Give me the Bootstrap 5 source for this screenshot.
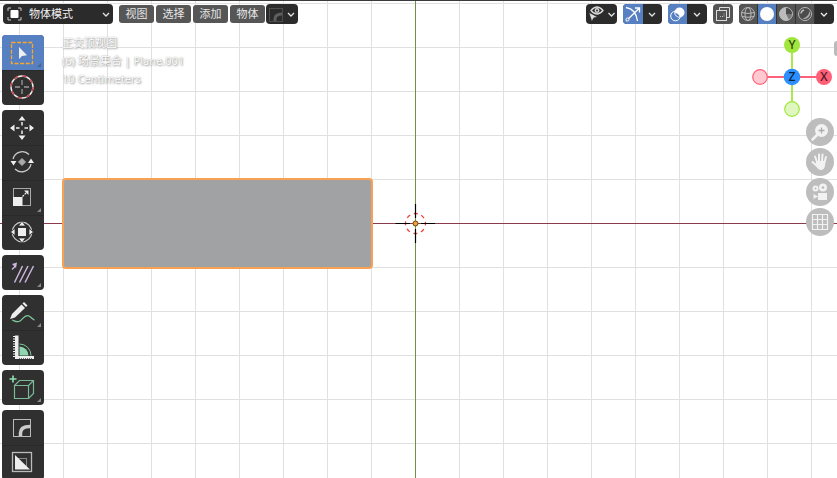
<!DOCTYPE html>
<html lang="zh-CN">
<head>
<meta charset="utf-8">
<meta name="viewport" content="width=device-width, initial-scale=1">
<title>3D 视图</title>
<link href="https://cdn.jsdelivr.net/npm/bootstrap@5.3.0/dist/css/bootstrap.min.css" rel="stylesheet">
<style>
body{font-family:"Noto Sans","Noto Sans CJK SC",sans-serif;font-size:11px;line-height:18px;background:#fff}
svg{display:block;flex:none}
button{border:0;padding:0;background:none;color:#e6e6e6}
.viewport{border-top:1px solid #3d3a40;
 background-image:linear-gradient(90deg,#e0e0e0 1px,transparent 1px),linear-gradient(#e0e0e0 1px,transparent 1px);
 background-size:44px 44px;background-position:19px 0,0 2px}
.axis-x{left:0;right:0;top:222px;height:1px;background:#8a3a48}
.axis-y{top:0;bottom:0;left:415px;width:1px;background:#6c9440}
.plane{left:62px;top:177px;width:311px;height:91px;background:#a1a2a4;border:2px solid #f9a152;border-radius:4px}
.cursor3d{left:395px;top:202px}
.topbar{padding:3px 3px 0}
.dark{background:#2b2b2b;border-radius:4px;height:20px;overflow:hidden}
.mode{width:110px;padding-left:4px}
.mode select{appearance:none;background:none;border:0;color:#f0f0f0;padding:0 0 0 7px;font-size:11px;line-height:18px;min-width:0;outline:0}
.menus{gap:2px;margin-left:6px;margin-right:1px}
.menus button{width:35px;height:18px;background:#565656;border-radius:3px;line-height:18px}
.right{gap:6px}
.on{background:#5680c2}
.mid{background:#545454}
.shade button+button{border-left:1px solid #333}
.tools{width:42px;gap:5px;margin:11px 0 0 2px}
.toolset{background:#303030;border-radius:4px;overflow:hidden}
.toolset button{display:block;height:35px}
.toolset button+button{border-top:1px solid #292929}
.info{margin:10px 0 0 18px;color:#fff;text-shadow:0 0 1px #999,1px 1px 2px #999}
.info p{margin:0}
.gizmo{padding:11px 3px 0 0}
.compass{margin-right:1px}
.navs{gap:2px;margin-top:1px}
.navs button{width:28px;height:28px;border-radius:50%;background:#bdbdbd}
.handle{right:0;top:40px;width:3px;height:15px;background:#bbb;border-radius:5px 0 0 5px}
</style>
<script src="https://cdn.jsdelivr.net/npm/bootstrap@5.3.0/dist/js/bootstrap.bundle.min.js"></script>
</head>
<body>
<main class="viewport position-relative vh-100 overflow-hidden">
 <div class="axis-x position-absolute"></div>
 <div class="axis-y position-absolute"></div>
 <div class="plane position-absolute"></div>
 <svg class="cursor3d position-absolute" width="41" height="41" viewBox="0 0 41 41"><circle cx="20.500" cy="20.500" r="10" fill="none" stroke="#fff" stroke-width="1.300"/><circle cx="20.500" cy="20.500" r="10" fill="none" stroke="#f04040" stroke-width="1.300" stroke-dasharray="4 3.850" stroke-dashoffset="2"/><path d="M0.500 20.500H15M26 20.500H40M20.500 1V15M20.500 26V40" stroke="#000" stroke-width="1.200"/><circle cx="20.500" cy="20.500" r="2.500" fill="#f6a12c" stroke="#5b4320"/></svg>
 <div class="handle position-absolute"></div>

 <header class="topbar position-relative d-flex align-items-center justify-content-between">
  <div class="d-flex align-items-center">
   <div class="mode dark d-flex align-items-center">
    <svg width="15" height="14" viewBox="0 0 15 14"><path d="M1 4V1H4M11 1H14V4M14 10V13H11M4 13H1V10" fill="none" stroke="#c8c8c8"/><rect x="3.500" y="3" width="8" height="8" rx="1" fill="#fff"/></svg>
    <select aria-label="模式" class="flex-grow-1"><option>物体模式</option></select>
    <svg width="15" height="20" viewBox="0 0 15 20"><path d="M5 9l3 3 3-3" fill="none" stroke="#e4e4e4" stroke-width="1.300"/></svg>
   </div>
   <nav class="menus d-flex align-items-center" aria-label="菜单">
    <button>视图</button><button>选择</button><button>添加</button><button>物体</button>
   </nav>
   <button class="dark" aria-label="倒角"><svg width="32" height="20" viewBox="0 0 32 20"><rect x="3.500" y="4.500" width="13" height="13" fill="none" stroke="#4e4e4e"/><path d="M9 17v-2q0-5 7-5" fill="none" stroke="#5e5e5e" stroke-width="3"/><path d="M22 9l3 3 3-3" fill="none" stroke="#e4e4e4" stroke-width="1.300"/></svg></button>
  </div>
  <div class="right d-flex">
   <button class="dark" aria-label="可见性"><svg width="31" height="20" viewBox="0 0 31 20"><path d="M5 6.500q6-7 12 0q-6 7-12 0z" fill="none" stroke="#d8d8d8" stroke-width="1.300"/><circle cx="11" cy="6.500" r="2.400" fill="#d8d8d8"/><circle cx="11" cy="6.500" r="1" fill="#2b2b2b"/><path d="M3 8.500l8.500 4.500-3.700.800-2 3.500z" fill="#e0e0e0" stroke="#2b2b2b" stroke-width=".500"/><path d="M22.500 9l3 3 3-3" fill="none" stroke="#e4e4e4" stroke-width="1.300"/></svg></button>
   <div class="dark d-flex">
    <button class="on" aria-label="控件"><svg width="20" height="20" viewBox="0 0 20 20"><path d="M3 3.500Q13 5 14.500 17M3 17L16 4.500M12 4h4.500v4.500" fill="none" stroke="#fff" stroke-width="1.300"/><circle cx="4.500" cy="15.500" r="1.500" fill="#5680c2" stroke="#fff"/></svg></button>
    <button aria-label="控件选项"><svg width="19" height="20" viewBox="0 0 19 20"><path d="M6 9l3 3 3-3" fill="none" stroke="#e4e4e4" stroke-width="1.300"/></svg></button>
   </div>
   <div class="dark d-flex">
    <button class="on" aria-label="叠加层"><svg width="19" height="20" viewBox="0 0 19 20"><circle cx="7.500" cy="12" r="4.800" fill="none" stroke="#fff"/><circle cx="11.500" cy="8.500" r="5" fill="#fff"/><path d="M6.700 8.800a5 5 0 0 0 5.300 4.500a5 5 0 0 0-5.300-4.500" fill="#5680c2" stroke="#fff" stroke-width=".700"/></svg></button>
    <button aria-label="叠加层选项"><svg width="20" height="20" viewBox="0 0 20 20"><path d="M7 9l3 3 3-3" fill="none" stroke="#e4e4e4" stroke-width="1.300"/></svg></button>
   </div>
   <button class="dark mid" aria-label="透视模式"><svg width="20" height="20" viewBox="0 0 20 20"><path d="M6.500 6.500V3.500H16.500V13.500H13.500" fill="none" stroke="#ddd"/><rect x="3.500" y="6.500" width="10" height="10" fill="none" stroke="#ddd"/><path d="M7 12.500h4V9" fill="none" stroke="#bbb" stroke-dasharray="1 1"/></svg></button>
   <div class="dark d-flex shade">
    <button class="mid" aria-label="线框"><svg width="18" height="20" viewBox="0 0 18 20"><g fill="none" stroke="#b9b9b9"><circle cx="9" cy="10" r="6.500"/><ellipse cx="9" cy="10" rx="3" ry="6.500"/><path d="M2.500 8.500q6.500 2 13 0M3 12.500q6 1.500 12 0"/></g></svg></button>
    <button class="on" aria-label="实体"><svg width="18" height="20" viewBox="0 0 18 20"><circle cx="9" cy="10" r="7" fill="#fff"/></svg></button>
    <button class="mid" aria-label="材质预览"><svg width="18" height="20" viewBox="0 0 18 20"><circle cx="9" cy="10" r="6.500" fill="#777" stroke="#b9b9b9"/><path d="M9 10V3.500A6.500 6.500 0 1 0 12 15.800Z" fill="#bbb"/><path d="M9 10V4A6 6 0 0 1 15 10Z" fill="#4a4a4a"/></svg></button>
    <button class="mid" aria-label="渲染"><svg width="18" height="20" viewBox="0 0 18 20"><circle cx="9" cy="10" r="6.500" fill="#4b4b4b" stroke="#b9b9b9"/><path d="M13.500 7a5.500 5.500 0 0 1-7 7.500q6-1.500 7-7.500" fill="#aaa"/><path d="M5 9.500a4 4 0 0 1 3-3.500" fill="none" stroke="#bbb" stroke-width="1.500"/></svg></button>
    <button aria-label="着色选项"><svg width="19" height="20" viewBox="0 0 19 20"><path d="M6 9l3 3 3-3" fill="none" stroke="#eee" stroke-width="1.300"/></svg></button>
   </div>
  </div>
 </header>

 <div class="position-relative d-flex align-items-start">
  <aside class="tools d-flex flex-column" aria-label="工具">
   <div class="toolset">
    <button class="on" aria-label="框选"><svg width="42" height="35" viewBox="0 0 42 35"><rect x="9.500" y="7.500" width="21" height="21" fill="none" stroke="#f9a72b" stroke-width="1.300" stroke-dasharray="4 1.600"/><path d="M17 12v12l3-3 5-.800z" fill="#f0f0f0"/><path d="M39 28v4h-4z" fill="#4a6490"/></svg></button>
    <button aria-label="游标"><svg width="42" height="35" viewBox="0 0 42 35"><circle cx="20" cy="16" r="11" fill="none" stroke="#eee" stroke-width="1.400"/><circle cx="20" cy="16" r="11" fill="none" stroke="#c4444c" stroke-width="1.400" stroke-dasharray="4.320 4.320"/><path d="M13 16h5M22 16h5M20 9v5M20 18v5" stroke="#999" stroke-width="1.300"/></svg></button>
   </div>
   <div class="toolset">
    <button aria-label="移动"><svg width="42" height="35" viewBox="0 0 42 35"><path d="M20 6l3.500 4.500h-7zM20 30l3.500-4.500h-7zM8 18l4.500-3.500v7zM32 18l-4.500-3.500v7z" fill="#eee"/><path d="M20 12v3.500M20 20.500V24M14 18h3.500M22.500 18H26" stroke="#eee" stroke-width="1.500"/></svg></button>
    <button aria-label="旋转"><svg width="42" height="35" viewBox="0 0 42 35"><path d="M11 13a9.500 9.500 0 0 1 16-4.500M29 18a9.500 9.500 0 0 1-16 5" fill="none" stroke="#ccc" stroke-width="1.300"/><path d="M8.500 15h6L11.500 19.500zM26 17h6L29 12.500z" fill="#eee"/><path d="M20 12.500l3.500 3.500L20 19.500l-3.500-3.500z" fill="#aaa" stroke="#aaa" stroke-linejoin="round"/></svg></button>
    <button aria-label="缩放"><svg width="42" height="35" viewBox="0 0 42 35"><rect x="11.500" y="7.500" width="17" height="17" fill="none" stroke="#aaa"/><rect x="11" y="16" width="9.500" height="9" fill="#eee"/><path d="M20.500 15.500l5-5" stroke="#eee" stroke-width="1.300" stroke-dasharray="2 1"/><path d="M26.500 9.500v4.500L22 9.500z" fill="#eee"/><path d="M39 27v4h-4z" fill="#888"/></svg></button>
    <button aria-label="变换"><svg width="42" height="35" viewBox="0 0 42 35"><circle cx="20" cy="16" r="9.800" fill="none" stroke="#ccc" stroke-width="1.200"/><rect x="16" y="12" width="8" height="8" fill="#eee"/><path d="M20 5l3.500 5h-7zM20 27l3.500-5h-7zM8.500 16l4.500-3.500v7zM31.500 16L27 12.500v7z" fill="#eee" stroke="#303030" stroke-width=".800"/></svg></button>
   </div>
   <div class="toolset">
    <button aria-label="随机"><svg width="42" height="35" viewBox="0 0 42 35"><path d="M11.500 27.500L19.500 11M16.500 27.500L25 11M22 27.500L30.500 11" transform="translate(1)" stroke="#cbb5dd" stroke-width="1.500"/><path d="M10 14.500l3.500-3.500" stroke="#cbb5dd" stroke-width="1.500"/><path d="M10 9l5-1.500L14 13z" fill="#cbb5dd"/><path d="M39 28v4h-4z" fill="#888"/></svg></button>
   </div>
   <div class="toolset">
    <button aria-label="标注"><svg width="42" height="35" viewBox="0 0 42 35"><path d="M8 24l2-5L19.500 9.500l3.500 3.500L13 22.500z" fill="#eee"/><path d="M20.500 8.500L22 7l3.500 3.500L24 12z" fill="#eee"/><path d="M10 25c3 1 5 3 8 1s5-7 9-5c2 1 4 4 5.500 4" fill="none" stroke="#7cc79c" stroke-width="1.300"/><path d="M39 28v4h-4z" fill="#888"/></svg></button>
    <button aria-label="测量"><svg width="42" height="35" viewBox="0 0 42 35"><path d="M13 4.500h3.500V25H32v3H13z" fill="#eee"/><path d="M12 5v22" stroke="#eee" stroke-width="2" stroke-dasharray="1 1.500"/><path d="M17 27.500h14" stroke="#666" stroke-dasharray="1 1"/><path d="M17.500 24.500v-9a9 9 0 0 1 9 9z" fill="#8fd6b0"/><path d="M17.500 13a11.500 11.500 0 0 1 11.500 11.500" fill="none" stroke="#7cc79c"/></svg></button>
   </div>
   <div class="toolset">
    <button aria-label="添加立方体"><svg width="42" height="35" viewBox="0 0 42 35"><path d="M12.500 15.500h14v13h-14zM12.500 15.500l5-5h14v13l-5 5M26.500 15.500l5-5" fill="none" stroke="#7ab897" stroke-width="1.200"/><path d="M11 5.500v7M7.500 9h7" stroke="#8fe0b4" stroke-width="1.600"/><path d="M39 28v4h-4z" fill="#888"/></svg></button>
   </div>
   <div class="toolset">
    <button aria-label="倒角工具"><svg width="42" height="35" viewBox="0 0 42 35"><rect x="11.500" y="9.500" width="17" height="17" fill="none" stroke="#bbb"/><path d="M18.500 26v-3q0-6.500 9.500-6.500" fill="none" stroke="#ccc" stroke-width="3.500"/></svg></button>
    <button aria-label="内插面"><svg width="42" height="35" viewBox="0 0 42 35"><rect x="10.500" y="6.500" width="19" height="19" fill="none" stroke="#bbb" stroke-width="1.300"/><rect x="16.500" y="12.500" width="8" height="8" fill="none" stroke="#888"/><path d="M13 9v14.500h15z" fill="#eee"/></svg></button>
   </div>
  </aside>
  <section class="info flex-grow-1">
   <p>正交顶视图</p>
   <p>(6) 场景集合 | Plane.001</p>
   <p>10 Centimeters</p>
  </section>
  <div class="gizmo d-flex flex-column align-items-end">
   <svg class="compass" width="82" height="82" viewBox="0 0 82 82" font-family="Noto Sans,sans-serif" font-size="12" font-weight="500" text-anchor="middle"><path d="M9 42H73" stroke="#ff6078" stroke-width="1.800"/><path d="M41 10V74" stroke="#a0e63c" stroke-width="1.800"/><circle cx="9" cy="42" r="7.300" fill="#ffc9d2" stroke="#ff6078" stroke-width="1.200"/><circle cx="73" cy="42" r="8" fill="#ff6078"/><circle cx="41" cy="10" r="8" fill="#a0e63c"/><circle cx="41" cy="74" r="7.300" fill="#e0f6c0" stroke="#a0e63c" stroke-width="1.200"/><circle cx="41" cy="42" r="8.300" fill="#2c8fff"/><text x="41" y="14" fill="#2f4410">Y</text><text x="41" y="46" fill="#0c2340">Z</text><text x="73" y="46" fill="#4a1822">X</text></svg>
   <div class="navs d-flex flex-column">
    <button aria-label="缩放视图"><svg width="28" height="28" viewBox="0 0 28 28"><circle cx="15.500" cy="12.500" r="6.500" fill="#f2f2f2"/><path d="M11 17l-4.500 4.500" stroke="#f2f2f2" stroke-width="2.500" stroke-linecap="round"/><path d="M12.500 12.500h6M15.500 9.500v6" stroke="#aaa" stroke-width="1.300"/></svg></button>
    <button aria-label="平移视图"><svg width="28" height="28" viewBox="0 0 28 28"><path d="M11 14L9 8.500M13 13V6.500M16 13l.500-6.500M18.500 14l1.500-5M11 18l-4.500-4" stroke="#f2f2f2" stroke-width="2" stroke-linecap="round"/><path d="M10 13h9.500l-.500 5q-1 4-4 4t-5-4z" fill="#f2f2f2"/></svg></button>
    <button aria-label="摄像机视图"><svg width="28" height="28" viewBox="0 0 28 28"><circle cx="9.500" cy="10.500" r="3" fill="#f2f2f2"/><circle cx="17" cy="9.500" r="4" fill="#f2f2f2"/><circle cx="9.500" cy="10.500" r="1" fill="#bbb"/><circle cx="17" cy="9.500" r="1.300" fill="#bbb"/><path d="M12 15h9v7h-9zM12 18.500L7.500 16v5z" fill="#f2f2f2"/></svg></button>
    <button aria-label="切换正交"><svg width="28" height="28" viewBox="0 0 28 28"><path d="M6.500 6.500h15v15h-15zM11.500 6.500v15M16.500 6.500v15M6.500 11.500h15M6.500 16.500h15" fill="none" stroke="#f2f2f2" stroke-width="1.200"/></svg></button>
   </div>
  </div>
 </div>
</main>
</body>
</html>
